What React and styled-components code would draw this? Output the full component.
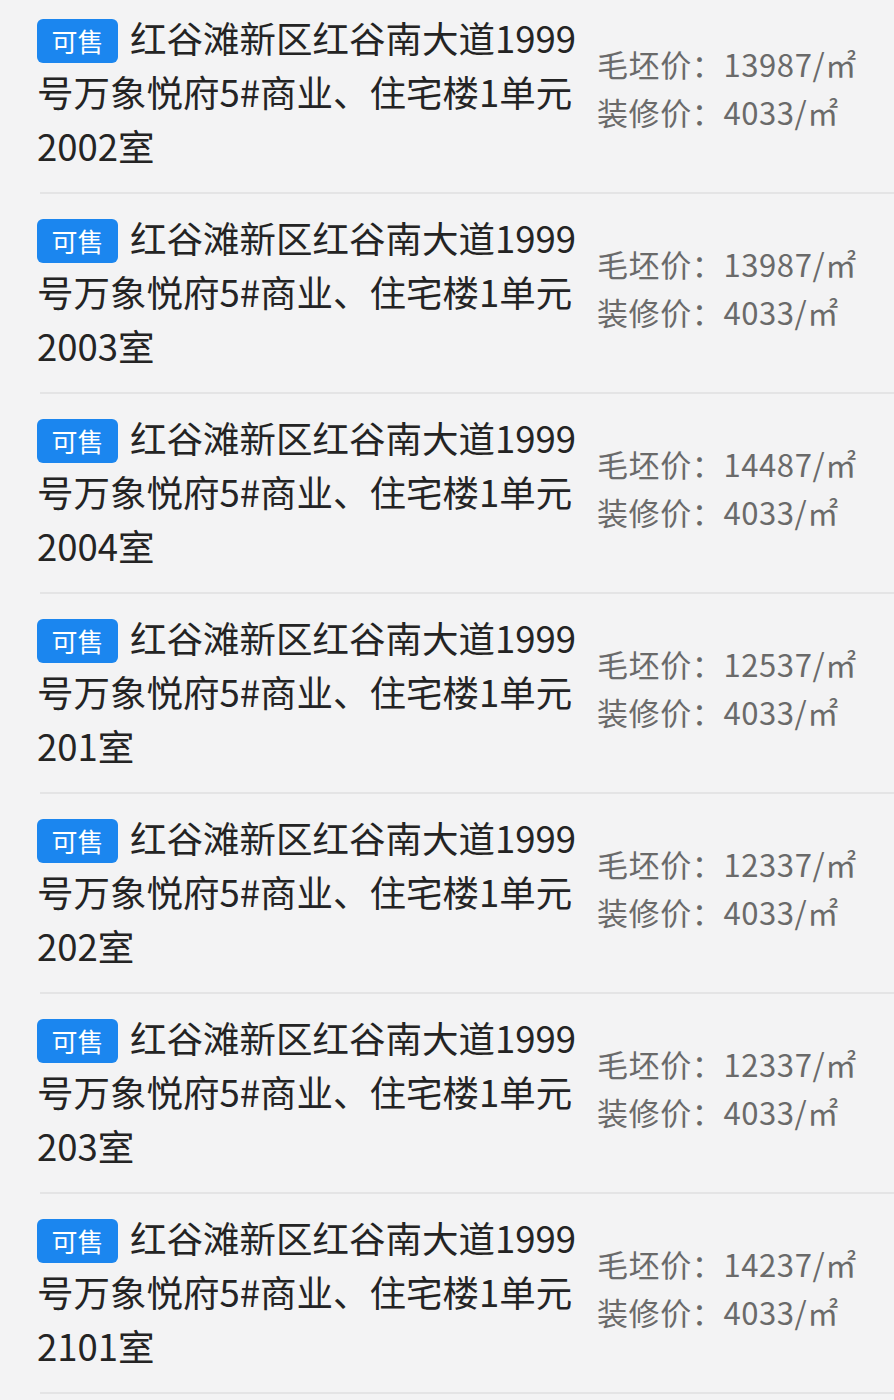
import React from 'react';
import styled, { createGlobalStyle } from 'styled-components';

const GlobalStyle = createGlobalStyle`
  body {
    margin: 0;
    background: #f3f3f4;
    font-family: "Noto Sans CJK SC", "Noto Sans", sans-serif;
  }
`;

const List = styled.div`
  margin-top: -6px;
  overflow: hidden;
`;

const Item = styled.div`
  display: flex;
  align-items: center;
  padding: 17px 0 19px 37px;
`;

const Divider = styled.div`
  height: 2px;
  margin-left: 40px;
  background: #e4e4e5;
`;

const Title = styled.div`
  width: 545px;
  flex: none;
  font-size: 36.5px;
  line-height: 54px;
  color: #242424;
`;

const Head = styled.div`
  display: flex;
  align-items: flex-start;
  white-space: nowrap;
`;

const Badge = styled.span`
  flex: none;
  margin-top: 8px;
  width: 81px;
  height: 44px;
  line-height: 44px;
  margin-right: 12px;
  border-radius: 6px;
  background: #1b86ef;
  color: #fff;
  font-size: 26px;
  text-align: center;
`;

const Prices = styled.div`
  margin-left: 15px;
  margin-top: -8px;
  font-size: 31px;
  letter-spacing: 0.6px;
  line-height: 48px;
  color: #6a6a6a;
  white-space: nowrap;
`;

const rooms = [
  { room: '2002', raw: '13987' },
  { room: '2003', raw: '13987' },
  { room: '2004', raw: '14487' },
  { room: '201', raw: '12537' },
  { room: '202', raw: '12337' },
  { room: '203', raw: '12337' },
  { room: '2101', raw: '14237' },
];

export default function App() {
  return (
    <>
      <GlobalStyle />
      <List>
        {rooms.map((r) => (
          <React.Fragment key={r.room}>
            <Item>
              <Title>
                <Head>
                  <Badge>可售</Badge>
                  <span>红谷滩新区红谷南大道1999</span>
                </Head>
                号万象悦府5#商业、住宅楼1单元{r.room}室
              </Title>
              <Prices>
                <div>毛坯价：{r.raw}/㎡</div>
                <div>装修价：4033/㎡</div>
              </Prices>
            </Item>
            <Divider />
          </React.Fragment>
        ))}
      </List>
    </>
  );
}
